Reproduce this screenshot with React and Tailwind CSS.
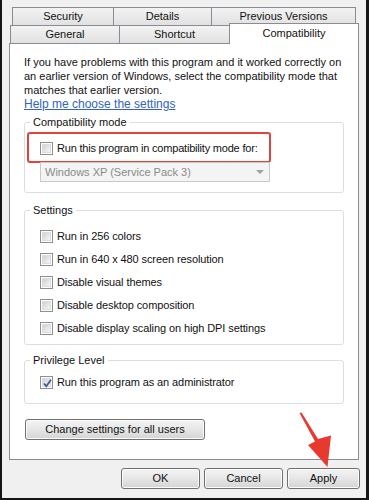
import React from 'react';

const Tab = ({ label, className = '', active }) => (
  <div
    className={`flex items-center justify-center border border-[#898c95] text-[11px] leading-none text-[#111] ${
      active
        ? 'bg-white border-b-0 relative z-10'
        : 'bg-linear-to-b from-[#f3f3f3] to-[#e1e1e1]'
    } ${className}`}
  >
    {label}
  </div>
);

const Checkbox = ({ checked }) => (
  <span className="w-[13px] h-[13px] border border-[#8e8f8f] bg-white flex items-center justify-center shrink-0 relative">
    <span className="w-[9px] h-[9px] bg-linear-to-br from-[#cdd0d5] to-[#f7f7f7] border border-[#dcdcdc]" />
    {checked && (
      <svg className="absolute left-[1px] top-[1px]" width="11" height="11" viewBox="0 0 11 11">
        <path d="M2 5.5 L4.3 8.3 L9 1.8" fill="none" stroke="#3c5a9a" strokeWidth="1.8" />
      </svg>
    )}
  </span>
);

const Row = ({ label, checked }) => (
  <div className="h-[23px] flex items-center gap-[4px] pl-[15px]">
    <Checkbox checked={checked} />
    <span className="tracking-[-0.1px]">{label}</span>
  </div>
);

const Button = ({ children, className = '' }) => (
  <button
    className={`h-[21px] border border-[#707070] rounded-[3px] bg-linear-to-b from-[#f4f4f4] via-[#e6e6e6] to-[#d4d4d4] text-[11px] text-[#111] flex items-center justify-center shadow-[inset_0_0_0_1px_#fbfbfb] ${className}`}
  >
    {children}
  </button>
);

const Group = ({ title, className = '', children }) => (
  <fieldset className={`border border-[#d5dfe5] rounded-[3px] mx-[14px] ${className}`}>
    <legend className="ml-[5px] px-[3px] leading-[14px]">{title}</legend>
    {children}
  </fieldset>
);

export default function App() {
  const settings = [
    'Run in 256 colors',
    'Run in 640 x 480 screen resolution',
    'Disable visual themes',
    'Disable desktop composition',
    'Disable display scaling on high DPI settings',
  ];

  return (
    <div className="relative w-[369px] h-[500px] bg-[#f0f0f0] border-l-2 border-r-[3px] border-b-2 border-[#161616] font-['Liberation_Sans',Arial,sans-serif] text-[11px] text-[#111] overflow-hidden">
      {/* tabs */}
      <div className="pt-[7px]">
        <div className="flex ml-[10px] h-[19px]">
          <Tab label="Security" className="w-[102px] h-[19px]" />
          <Tab label="Details" className="w-[99px] h-[19px] -ml-px" />
          <Tab label="Previous Versions" className="w-[145px] h-[19px] -ml-px" />
        </div>
        <div className="flex items-start ml-[8px] h-[18px] -mt-px">
          <Tab label="General" className="w-[110px] h-[18px] border-b-0" />
          <Tab label="Shortcut" className="w-[111px] h-[18px] border-b-0 -ml-px" />
          <Tab label="Compatibility" active className="w-[130px] h-[21px] -mt-[2px] -ml-px pb-[2px]" />
        </div>
      </div>

      {/* panel */}
      <div className="ml-[7px] w-[350px] h-[417px] bg-white border border-[#898c95] flex flex-col">
        <p className="mt-[11px] mx-[14px] leading-[14px]">
          If you have problems with this program and it worked correctly on an earlier version of Windows, select the compatibility mode that matches that earlier version.
        </p>
        <a className="mx-[14px] leading-[14px] text-[12px] text-[#3164c0] underline self-start">
          Help me choose the settings
        </a>

        <Group title="Compatibility mode" className="mt-[4px] pb-[10px]">
          <div className="mt-[3px] ml-[2px] w-[244px] h-[31px] border-2 border-[#e0443c] rounded-[3px] flex items-center gap-[4px] pl-[11px] pt-[1px]">
            <Checkbox />
            <span className="tracking-[-0.2px]">Run this program in compatibility mode for:</span>
          </div>
          <div className="-mt-px ml-[15px] w-[230px] h-[20px] border border-[#c9c9c9] bg-[#f4f4f4] flex items-center justify-between px-[4px] text-[#8a8a8a]">
            <span>Windows XP (Service Pack 3)</span>
            <svg width="8" height="5" viewBox="0 0 8 5" className="mr-[1px]">
              <path d="M0 0 L8 0 L4 4 Z" fill="#a0a0a0" />
            </svg>
          </div>
        </Group>

        <Group title="Settings" className="mt-[10px] pb-[4px]">
          <div className="mt-[8px]">
            {settings.map((s) => (
              <Row key={s} label={s} />
            ))}
          </div>
        </Group>

        <Group title="Privilege Level" className="mt-[8px] pb-[9px]">
          <div className="mt-[4px]">
            <Row label="Run this program as an administrator" checked />
          </div>
        </Group>

        <Button className="mt-[15px] ml-[15px] w-[180px]">Change settings for all users</Button>
      </div>

      {/* dialog buttons */}
      <div className="flex justify-end gap-[4px] mt-[8px] pr-[6px]">
        <Button className="w-[79px]">OK</Button>
        <Button className="w-[79px]">Cancel</Button>
        <Button className="w-[73px]">Apply</Button>
      </div>

      {/* annotation arrow */}
      <svg
        className="absolute left-[294px] top-[408px] pointer-events-none"
        width="40"
        height="62"
        viewBox="296 408 40 62"
      >
        <path d="M299.5 413 L301.5 412.5 L318 439 L331 435.5 L327.5 467 L308 445 L315 441.5 Z" fill="#e8392e" />
      </svg>
    </div>
  );
}
